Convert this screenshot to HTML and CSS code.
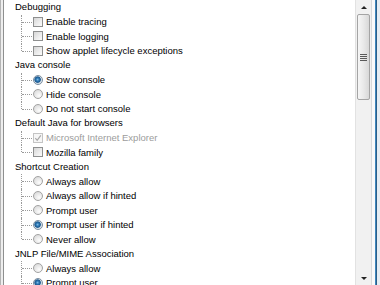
FILE: index.html
```html
<!DOCTYPE html>
<html>
<head>
<meta charset="utf-8">
<link rel="stylesheet" href="styles.css">
</head>
<body>
<div class="window">
  <div class="edge-left"></div>
  <div class="tree">
    <div class="group">
      <div class="label">Debugging</div>
      <div class="item"><span class="cb"></span><span class="txt">Enable tracing</span></div>
      <div class="item"><span class="cb"></span><span class="txt">Enable logging</span></div>
      <div class="item"><span class="cb"></span><span class="txt">Show applet lifecycle exceptions</span></div>
    </div>
    <div class="group">
      <div class="label">Java console</div>
      <div class="item"><span class="rb on"></span><span class="txt">Show console</span></div>
      <div class="item"><span class="rb"></span><span class="txt">Hide console</span></div>
      <div class="item"><span class="rb"></span><span class="txt">Do not start console</span></div>
    </div>
    <div class="group">
      <div class="label">Default Java for browsers</div>
      <div class="item disabled"><span class="cb checked"><svg viewBox="0 0 10 10" width="10" height="10"><path d="M2.3 5.2 L4.2 7.3 L7.8 2.4" fill="none" stroke="#a8a8a8" stroke-width="1.2"/></svg></span><span class="txt">Microsoft Internet Explorer</span></div>
      <div class="item"><span class="cb"></span><span class="txt">Mozilla family</span></div>
    </div>
    <div class="group">
      <div class="label">Shortcut Creation</div>
      <div class="item"><span class="rb"></span><span class="txt">Always allow</span></div>
      <div class="item"><span class="rb"></span><span class="txt">Always allow if hinted</span></div>
      <div class="item"><span class="rb"></span><span class="txt">Prompt user</span></div>
      <div class="item"><span class="rb on"></span><span class="txt">Prompt user if hinted</span></div>
      <div class="item"><span class="rb"></span><span class="txt">Never allow</span></div>
    </div>
    <div class="group">
      <div class="label">JNLP File/MIME Association</div>
      <div class="item"><span class="rb"></span><span class="txt">Always allow</span></div>
      <div class="item"><span class="rb on"></span><span class="txt">Prompt user</span></div>
      <div class="item"><span class="rb"></span><span class="txt">Never allow</span></div>
    </div>
  </div>
  <div class="scrollbar">
    <div class="arrow"><span class="tri up"></span></div>
    <div class="thumb"><span class="grip"></span></div>
    <div class="track"></div>
    <div class="arrow"><span class="tri down"></span></div>
  </div>
  <div class="edge-right">
    <div class="er-white"></div>
    <div class="er-blue"></div>
    <div class="er-dark"></div>
    <div class="er-light"></div>
  </div>
</div>
</body>
</html>
```

FILE: styles.css
```css
html, body {
  margin: 0;
  padding: 0;
  background: #ffffff;
}

.window {
  width: 380px;
  height: 285px;
  display: flex;
  overflow: hidden;
  font-family: "Liberation Sans", Arial, sans-serif;
  font-size: 9.5px;
  color: #000000;
}

.edge-left {
  flex: none;
  border-left: 1px solid #b4b4b4;
  border-right: 1px solid #8e8f8f;
  box-sizing: border-box;
  background: #eeeeee;
  width: 4px;
}

.tree {
  flex: 1;
  background: #ffffff;
  overflow: hidden;
  padding-left: 11px;
}

.label {
  height: 14.5px;
  line-height: 14.5px;
  white-space: nowrap;
}

.item {
  position: relative;
  height: 14.5px;
  display: flex;
  align-items: center;
  padding-left: 18px;
  white-space: nowrap;
}

.item::before {
  content: "";
  position: absolute;
  left: 6px;
  top: 0;
  bottom: 0;
  border-left: 1px dotted #9a9a9a;
}

.item:last-child::before {
  bottom: 50%;
}

.item::after {
  content: "";
  position: absolute;
  left: 7px;
  top: 50%;
  width: 10px;
  border-top: 1px dotted #9a9a9a;
}

.txt {
  margin-left: 3px;
}

.cb {
  width: 10px;
  height: 10px;
  box-sizing: border-box;
  border: 1px solid #8e8f8f;
  background: linear-gradient(135deg, #d6d6d6 0%, #eeeeee 60%, #fbfbfb 100%);
  flex: none;
  display: flex;
  align-items: center;
  justify-content: center;
}

.cb svg {
  display: block;
  margin: -1px;
}

.disabled .cb {
  border-color: #c4c4c4;
  background: #f6f6f6;
}

.disabled .txt {
  color: #9c9c9c;
}

.rb {
  width: 10px;
  height: 10px;
  box-sizing: border-box;
  border-radius: 50%;
  border: 1px solid #a2a2a2;
  background: radial-gradient(circle at 65% 70%, #fdfdfd 0%, #e6e6e6 55%, #d2d2d2 100%);
  flex: none;
}

.rb.on {
  border-color: #7b8ea0;
  background: radial-gradient(circle at 45% 45%, #7ec0ea 0px, #2a73b0 1.6px, #1b5a90 2.8px, #c9d6e2 3.6px, #f2f4f6 5px);
}

.scrollbar {
  width: 16px;
  flex: none;
  background: #f1f1f1;
  border-left: 1px solid #e2e2e2;
  display: flex;
  flex-direction: column;
  box-sizing: border-box;
}

.arrow {
  height: 14px;
  flex: none;
  display: flex;
  align-items: center;
  justify-content: center;
}

.tri {
  width: 0;
  height: 0;
  border-left: 3px solid transparent;
  border-right: 3px solid transparent;
}

.tri.up {
  border-bottom: 3px solid #222;
}

.tri.down {
  border-top: 3px solid #222;
}

.thumb {
  height: 86px;
  margin: 0 1px;
  box-sizing: border-box;
  border: 1px solid #a4a4a4;
  border-radius: 2px;
  background: linear-gradient(90deg, #f6f6f6 0%, #e9e9e9 50%, #d8d8d8 100%);
  display: flex;
  align-items: center;
  justify-content: center;
  flex: none;
}

.grip {
  width: 7px;
  height: 7px;
  background: repeating-linear-gradient(180deg, #5a5a5a 0px, #5a5a5a 1px, transparent 1px, transparent 2px);
}

.track {
  flex: 1;
}

.edge-right {
  display: flex;
  flex: none;
}

.er-white {
  width: 3px;
  background: #fafafa;
  border-left: 1px solid #d9d9d9;
}

.er-blue {
  width: 1px;
  background: #3f86bd;
}

.er-dark {
  width: 1px;
  background: #2c5f88;
}

.er-light {
  width: 3px;
  background: #e6edf3;
}
```
